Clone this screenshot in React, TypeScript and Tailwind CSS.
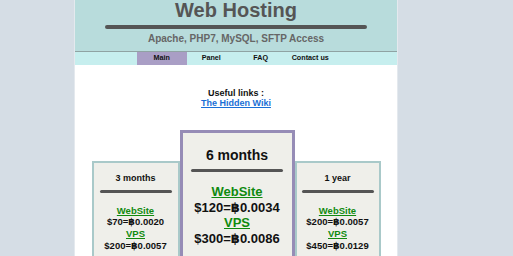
import React from "react";

function Plan({
  title,
  web,
  vps,
  big,
}: {
  title: string;
  web: string;
  vps: string;
  big?: boolean;
}) {
  if (big) {
    return (
      <div className="w-[115px] h-[140px] shrink-0 border-[3px] border-[#968cb6] bg-[#efefea] flex flex-col items-center pt-[13.5px]">
        <div className="text-[14px] leading-[16px] font-bold text-[#111]">{title}</div>
        <div className="mt-[6px] w-[92px] h-[3.5px] rounded-full bg-[#555]" />
        <div className="mt-[11.5px] flex flex-col items-center text-[13px] leading-[15.9px] font-bold text-[#111]">
          <span className="text-[#0f8a0f] underline">WebSite</span>
          <span>{web}</span>
          <span className="text-[#0f8a0f] underline">VPS</span>
          <span>{vps}</span>
        </div>
      </div>
    );
  }
  return (
    <div className="mt-[31px] h-[110px] shrink-0 border-[2.5px] border-[#a9c9c9] bg-[#efefea] flex flex-col items-center pt-[10.2px]">
      <div className="text-[9px] leading-[11px] font-bold text-[#111]">{title}</div>
      <div className="mt-[5.3px] w-[72px] h-[3.8px] rounded-full bg-[#555]" />
      <div className="mt-[11.5px] flex flex-col items-center text-[9.5px] leading-[11.6px] font-bold text-[#111]">
        <span className="text-[#0f8a0f] underline">WebSite</span>
        <span>{web}</span>
        <span className="text-[#0f8a0f] underline">VPS</span>
        <span>{vps}</span>
      </div>
    </div>
  );
}

export default function App() {
  return (
    <div
      className="w-[513px] h-[256px] overflow-hidden bg-[#d5dde5]"
      style={{ fontFamily: '"Liberation Sans", Arial, "DejaVu Sans", sans-serif' }}
    >
      <div className="ml-[74px] w-[324px] h-[256px] bg-white border-x border-[#e4e9ee]">
        <div className="h-[52px] bg-[#b8dcdc] border-b border-[#8fa3a3] flex flex-col items-center">
          <div className="text-[20px] leading-[20px] font-bold text-[#555]">Web Hosting</div>
          <div className="mt-[4.5px] w-[262px] h-[4.5px] rounded-full bg-[#555]" />
          <div className="mt-[4.2px] text-[10px] leading-[12px] font-bold text-[#666]">
            Apache, PHP7, MySQL, SFTP Access
          </div>
        </div>
        <div className="h-[13px] bg-[#c6eeee] flex justify-center">
          {["Main", "Panel", "FAQ", "Contact us"].map((t, i) => (
            <div
              key={t}
              className={
                "w-[49.5px] flex items-center justify-center text-[7.2px] font-bold text-[#111] whitespace-nowrap " +
                (i === 0 ? "bg-[#a99ec5]" : "")
              }
            >
              {t}
            </div>
          ))}
        </div>
        <div className="pt-[22.7px] flex flex-col items-center text-[9px] leading-[10.7px] font-bold">
          <div className="text-[#111]">Useful links :</div>
          <div className="text-[#1a6fd6] underline">The Hidden Wiki</div>
        </div>
        <div className="mt-[21px] flex justify-center items-start">
          <div className="w-[88px]">
            <Plan title="3 months" web="$70=฿0.0020" vps="$200=฿0.0057" />
          </div>
          <Plan big title="6 months" web="$120=฿0.0034" vps="$300=฿0.0086" />
          <div className="w-[86px]">
            <Plan title="1 year" web="$200=฿0.0057" vps="$450=฿0.0129" />
          </div>
        </div>
      </div>
    </div>
  );
}
